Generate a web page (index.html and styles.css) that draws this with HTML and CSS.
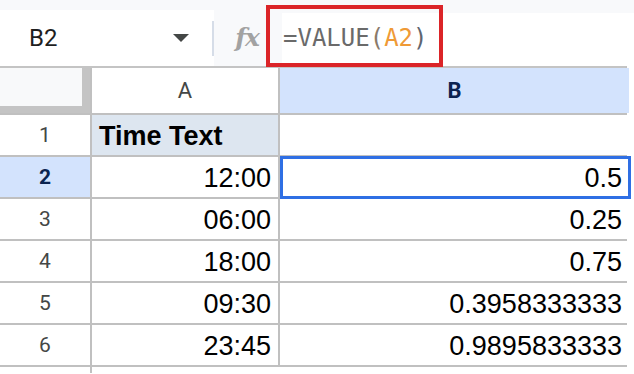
FILE: index.html
```html
<!DOCTYPE html>
<html lang="en">
<head>
    <meta charset="UTF-8">
    <meta name="viewport" content="width=device-width, initial-scale=1.0">
    <title>VALUE - Sheet</title>
    <link rel="stylesheet" href="styles.css">
</head>
<body>
    <div class="toolbar">
        <div class="name-box">
            <span class="cell-ref">B2</span>
            <span class="caret"></span>
        </div>
        <div class="fx">fx</div>
        <div class="formula">
            <span class="f-plain">=VALUE</span><span class="f-paren">(</span><span class="f-ref">A2</span><span class="f-close">)</span>
        </div>
        <div class="highlight"></div>
    </div>

    <div class="grid">
        <div class="corner"><div class="corner-inner"></div></div>
        <div class="col-head">A</div>
        <div class="col-head active">B</div>

        <div class="row-head">1</div>
        <div class="cell header-cell">Time Text</div>
        <div class="cell"></div>

        <div class="row-head active">2</div>
        <div class="cell num">12:00</div>
        <div class="cell num selected">0.5</div>

        <div class="row-head">3</div>
        <div class="cell num">06:00</div>
        <div class="cell num">0.25</div>

        <div class="row-head">4</div>
        <div class="cell num">18:00</div>
        <div class="cell num">0.75</div>

        <div class="row-head">5</div>
        <div class="cell num">09:30</div>
        <div class="cell num">0.3958333333</div>

        <div class="row-head">6</div>
        <div class="cell num">23:45</div>
        <div class="cell num">0.9895833333</div>

        <div class="row-head"></div>
        <div class="cell wide"></div>
    </div>
</body>
</html>
```

FILE: styles.css
```css
* {
    box-sizing: border-box;
}

body {
    margin: 0;
    background: #fff;
    font-family: 'Liberation Sans', Arial, sans-serif;
    overflow: hidden;
}

/* Formula bar */
.toolbar {
    position: relative;
    display: flex;
    height: 66px;
    padding-top: 10px;
    background: #f8f9fb;
}

.name-box {
    display: flex;
    align-items: center;
    width: 214px;
    background: #fff;
    border-right: 2px solid #d6dde8;
    border-image: linear-gradient(to bottom, #fff 12px, #d6dde8 12px, #d6dde8 45px, #fff 45px) 1;
}

.cell-ref {
    flex: 1;
    padding-left: 29px;
    font-family: Roboto, sans-serif;
    font-size: 24px;
    color: #1f1f1f;
}

.caret {
    width: 0;
    height: 0;
    margin-right: 23px;
    border-left: 8px solid transparent;
    border-right: 8px solid transparent;
    border-top: 8px solid #444746;
}

.fx {
    width: 68px;
    display: flex;
    align-items: center;
    justify-content: center;
    padding-bottom: 2px;
    padding-right: 2px;
    font-family: 'DejaVu Serif', serif;
    font-style: italic;
    font-weight: bold;
    font-size: 25px;
    letter-spacing: -1px;
    color: #a2a2a2;
}

.formula {
    flex: 1;
    display: flex;
    align-items: center;
    margin-top: 3px;
    padding-left: 1px;
    padding-bottom: 4px;
    background: #fff;
    font-family: 'DejaVu Sans Mono', monospace;
    font-size: 24px;
}

.f-plain { color: #6a6a6a; }
.f-paren { color: #8a7a6a; }
.f-ref { color: #ef9a36; }
.f-close { color: #5f6670; }

/* red annotation frame */
.highlight {
    position: absolute;
    left: 266px;
    top: 5px;
    width: 177px;
    height: 62px;
    border: 4px solid #db2428;
}

/* Sheet grid */
.grid {
    display: grid;
    grid-template-columns: 90px 186px 349px;
    grid-template-rows: 45px repeat(6, 40px) 6px;
    gap: 2px;
    width: 627px;
    border-top: 2px solid #c4c4c4;
    border-right: 2px solid #c0c0c0;
    background: #c0c0c0;
}

.corner {
    background: #c4c4c4;
}

.corner-inner {
    width: 82px;
    height: 38px;
    background: #f8f9fa;
}

.col-head,
.row-head {
    display: flex;
    align-items: center;
    justify-content: center;
    background: #fff;
    font-family: Roboto, sans-serif;
    font-size: 21px;
    color: #444746;
}

.col-head {
    font-size: 22px;
}

.col-head.active,
.row-head.active {
    background: #d3e3fd;
    color: #0b2350;
    font-weight: bold;
}

.cell {
    position: relative;
    display: flex;
    align-items: flex-end;
    padding: 0 7px 4px;
    background: #fff;
    font-size: 27px;
    line-height: 30px;
    color: #000;
}

.cell.num {
    justify-content: flex-end;
}

.header-cell {
    background: #dde6f0;
    font-weight: bold;
}

.cell.wide {
    grid-column: 2 / 4;
}

.selected::after {
    content: "";
    position: absolute;
    top: -1px;
    left: 0;
    right: -2px;
    bottom: -2px;
    border: 3px solid #2f6fe4;
}
```
